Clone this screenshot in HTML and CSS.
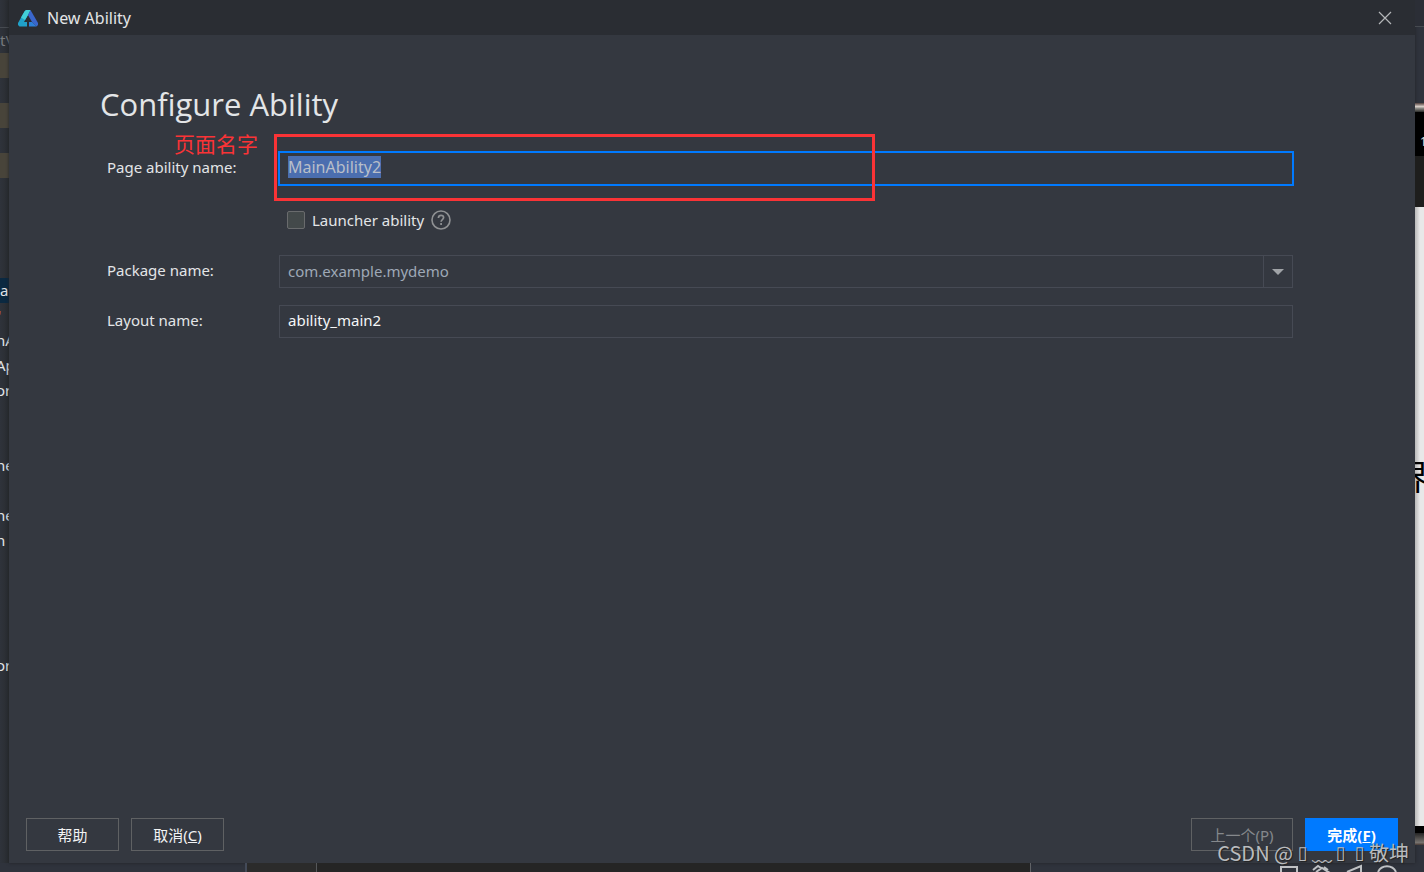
FILE: index.html
```html
<!DOCTYPE html>
<html lang="zh-CN">
<head>
  <meta charset="UTF-8">
  <meta name="viewport" content="width=device-width, initial-scale=1.0">
  <title>New Ability</title>
  <link rel="stylesheet" href="styles.css">
</head>
<body>
  <div class="workspace">
    <div class="tree">
      <div class="tree-header"></div>
      <div class="row dim">t\</div>
      <div class="row changed"></div>
      <div class="row"></div>
      <div class="row changed"></div>
      <div class="row"></div>
      <div class="row changed"></div>
      <div class="row"></div>
      <div class="row"></div>
      <div class="row"></div>
      <div class="row"></div>
      <div class="row selected">a</div>
      <div class="row mark">'</div>
      <div class="row cut">nA</div>
      <div class="row cut">Ap</div>
      <div class="row cut">or</div>
      <div class="row"></div>
      <div class="row"></div>
      <div class="row cut">ne</div>
      <div class="row"></div>
      <div class="row cut">ne</div>
      <div class="row cut">n</div>
      <div class="row"></div>
      <div class="row"></div>
      <div class="row"></div>
      <div class="row"></div>
      <div class="row cut">or</div>
    </div>

    <main class="dialog">
      <header class="titlebar">
        <svg class="logo" width="20" height="17" viewBox="0 0 20 17">
          <path d="M6.500 1.500L8 0h4.500L10 5l-4 7h3v4.500H1.500L0 15v-2z" fill="#20a0c8"/>
          <path d="M6.500 1.500L8 0h4.500L10 5l-3 5-4-2.500z" fill="#42cfd6"/>
          <path d="M12.500 0L20 13v2l-1.500 1.500L14 12 10 5z" fill="#3a66cc"/>
          <path d="M11 12h3l4.500 4.500H11z" fill="#2d80d8"/>
        </svg>
        <span class="title">New Ability</span>
        <button class="close" aria-label="Close">
          <svg width="14" height="14" viewBox="0 0 14 14"><path d="M1 1l12 12M13 1L1 13" stroke="#b4b6b9" stroke-width="1.2"/></svg>
        </button>
      </header>

      <section class="content">
        <h1>Configure Ability</h1>
        <form class="form">
          <label for="ability">Page ability name:</label>
          <div class="field">
            <input type="text" id="ability" class="active" value="MainAbility2">
            <span class="note">页面名字</span>
            <span class="note-box"></span>
          </div>

          <div class="launcher">
            <input type="checkbox" id="launcher">
            <label for="launcher">Launcher ability</label>
            <svg width="20" height="20" viewBox="0 0 20 20" fill="none" stroke="#8f9193">
              <circle cx="10" cy="10" r="9" stroke-width="1.6"/>
              <path d="M7.4 8c0-1.800 1.100-2.700 2.600-2.700s2.600.9 2.600 2.300c0 1.900-2.500 2-2.500 4.100M10.100 13v2" stroke-width="1.700"/>
            </svg>
          </div>

          <label for="package">Package name:</label>
          <div class="field select">
            <select id="package">
              <option>com.example.mydemo</option>
            </select>
            <span class="arrow"></span>
          </div>

          <label for="layout">Layout name:</label>
          <div class="field">
            <input type="text" id="layout" value="ability_main2">
          </div>
        </form>
      </section>

      <footer class="buttons">
        <button>帮助</button>
        <button>取消(<u>C</u>)</button>
        <span class="spacer"></span>
        <button class="prev" disabled>上一个(P)</button>
        <button class="primary">完成(<u>F</u>)</button>
      </footer>
    </main>

    <div class="preview">
      <div class="preview-head"></div>
      <div class="preview-tools"></div>
      <div class="phone-edge"></div>
      <div class="phone-status">1</div>
      <div class="phone-title"></div>
      <div class="phone-page">界</div>
      <div class="phone-chin"></div>
      <div class="phone-edge bottom"></div>
      <div class="preview-foot"></div>
    </div>
  </div>

  <div class="bottom">
    <div class="bottom-left"></div>
    <div class="bottom-gutter"></div>
    <div class="bottom-editor"></div>
    <div class="bottom-right">
      <svg width="120" height="9" viewBox="0 0 120 9" fill="none" stroke="#bfc1c4" stroke-width="2">
        <path d="M2 9V4h16v5"/>
        <path d="M34 7l5-4 3 2M37 9l6-4 8 5M45 4l4 3"/>
        <path d="M68 9l14-6v6"/>
        <path d="M99 9a10 10 0 0 1 18 0"/>
      </svg>
    </div>
  </div>

  <div class="watermark">CSDN @<i>▯</i><b>﹏</b><i>▯</i><i>▯</i>敬坤</div>

  <script>
    const ability = document.getElementById('ability');
    ability.focus();
    ability.select();
  </script>
</body>
</html>
```

FILE: styles.css
```css
*{
  box-sizing: border-box;
}

body{
  margin: 0;
  height: 100vh;
  display: flex;
  flex-direction: column;
  overflow: hidden;
  background-color: #2f333c;
  color: #e3e5e7;
  font-family: "Noto Sans", "Noto Sans CJK SC", sans-serif;
  font-size: 15px;
}

button, input, select{
  font: inherit;
  color: inherit;
}

.workspace{
  flex: 1;
  min-height: 0;
  display: flex;
}

/* project tree behind the dialog */
.tree{
  width: 9px;
  overflow: hidden;
  background: linear-gradient(to right, #2f333b, #292c30);
}

.tree-header{
  height: 28px;
  border-bottom: 1px solid #464a50;
}

.row{
  height: 25px;
  line-height: 25px;
  white-space: nowrap;
}

.cut{
  text-indent: -4px;
}

.dim{
  color: #777a7e;
}

.mark{
  color: #b8692c;
  text-indent: -2px;
}

.changed{
  background-color: #48443a;
}

.selected{
  background-color: #0b2941;
}

/* dialog */
.dialog{
  flex: 1;
  min-width: 0;
  display: flex;
  flex-direction: column;
  background-color: #343840;
  box-shadow: 0 0 3px #202226;
}

.titlebar{
  height: 35px;
  padding: 0 23px 0 9px;
  display: flex;
  align-items: center;
  background-color: #2a2d33;
}

.logo{
  margin-top: 2px;
}

.title{
  flex: 1;
  margin-left: 9px;
  font-size: 16px;
}

.close{
  padding: 0;
  border: none;
  background: none;
  display: flex;
}

.content{
  flex: 1;
  padding: 47px 122px 0 91px;
}

h1{
  margin: 0 0 26px;
  font-family: "Open Sans", sans-serif;
  font-size: 31px;
  line-height: 44px;
  font-weight: normal;
}

.form{
  margin-left: 7px;
  display: grid;
  grid-template-columns: 172px 1fr;
  row-gap: 17px;
  line-height: 30px;
}

.field{
  position: relative;
}

.field input, .field select{
  display: block;
  width: 100%;
  height: 33px;
  padding: 0 8px 3px;
  border: 1px solid #464a54;
  border-radius: 0;
  outline: none;
  background-color: #343840;
  color: #f5f6f7;
}

.field .active{
  border-color: #007aff;
  box-shadow: 0 0 0 1px #007aff;
  color: #aeb5bf;
  font-size: 16px;
}

.active::selection{
  background-color: #4b6eaf;
  color: #b9bfc9;
}

.field select{
  appearance: none;
  color: #9ea8b6;
}

.arrow{
  position: absolute;
  top: 1px;
  right: 1px;
  bottom: 1px;
  width: 29px;
  border-left: 1px solid #464a54;
  display: flex;
  align-items: center;
  justify-content: center;
  pointer-events: none;
}

.arrow::before{
  content: "";
  border: 6px solid transparent;
  border-top-color: #a0a3a7;
  border-bottom: none;
}

.launcher{
  grid-column: 2;
  height: 36px;
  padding-left: 8px;
  display: flex;
  align-items: center;
}

.launcher input{
  appearance: none;
  width: 18px;
  height: 18px;
  margin: 0 7px 0 0;
  border: 1px solid #696b6d;
  border-radius: 2px;
  background-color: #43494a;
}

.launcher svg{
  margin-left: 7px;
}

/* red annotation over the first field */
.note{
  position: absolute;
  top: -24px;
  right: calc(100% + 21px);
  color: #fa3336;
  font-family: "Noto Sans CJK SC", sans-serif;
  font-size: 21px;
  white-space: nowrap;
}

.note-box{
  position: absolute;
  top: -18px;
  bottom: -16px;
  left: -5px;
  width: 59.3%;
  border: 3px solid #fa3336;
  pointer-events: none;
}

.buttons{
  padding: 0 17px 12px;
  display: flex;
  gap: 12px;
}

.buttons button{
  min-width: 93px;
  height: 33px;
  padding: 0;
  border: 1px solid #5f6163;
  background-color: #343840;
  color: #f2f3f4;
}

.spacer{
  flex: 1;
}

.buttons .prev{
  width: 102px;
  color: #85888c;
}

.buttons .primary{
  border-color: #007aff;
  background-color: #007aff;
  color: #fff;
  font-weight: bold;
}

/* phone preview behind the dialog */
.preview{
  width: 9px;
  overflow: hidden;
  display: flex;
  flex-direction: column;
  color: #ddd;
}

.preview-head{
  height: 27px;
  background-color: #2b2e36;
  border-bottom: 1px solid #464a50;
}

.preview-tools{
  height: 76px;
}

.phone-edge{
  height: 9px;
  background: linear-gradient(#51403c, #d8d0ca 40%, #8a8984 60%, #2b2b29);
}

.phone-status{
  height: 44px;
  padding-left: 5px;
  background-color: #000;
  font-size: 12px;
  line-height: 60px;
}

.phone-title{
  height: 51px;
  background-color: #1e1e1d;
}

.phone-page{
  flex: 1;
  padding-top: 245px;
  background: linear-gradient(to right, #b8b8b8, #e8e8e8 5px);
  color: #000;
  font-size: 34px;
  line-height: 50px;
  text-indent: -20px;
  white-space: nowrap;
}

.phone-chin{
  height: 7px;
  background-color: #000;
}

.phone-edge.bottom{
  height: 12px;
  background: linear-gradient(#242424, #77736f 80%, #463833);
}

.preview-foot{
  height: 18px;
}

.bottom{
  height: 9px;
  display: flex;
  overflow: hidden;
}

.bottom-left{
  width: 247px;
  border-right: 2px solid #434a58;
}

.bottom-gutter{
  width: 70px;
  border-right: 1px solid #55575a;
  background-color: #2b2b2b;
}

.bottom-editor{
  flex: 1;
  border-right: 1px solid #606266;
  background-color: #252525;
}

.bottom-right{
  width: 393px;
  padding-right: 25px;
  display: flex;
  justify-content: flex-end;
}

.watermark{
  position: absolute;
  right: 15px;
  bottom: 4px;
  display: flex;
  align-items: center;
  color: #b9bbbe;
  font-family: "Noto Sans CJK SC", sans-serif;
  font-size: 20px;
  line-height: 30px;
  text-shadow: 1px 1px 1px #222;
  pointer-events: none;
}

.watermark i, .watermark b{
  width: 19px;
  font-style: normal;
  font-weight: normal;
  text-align: center;
}

.watermark i{
  font-family: "DejaVu Sans", sans-serif;
  font-size: 18px;
}
```
